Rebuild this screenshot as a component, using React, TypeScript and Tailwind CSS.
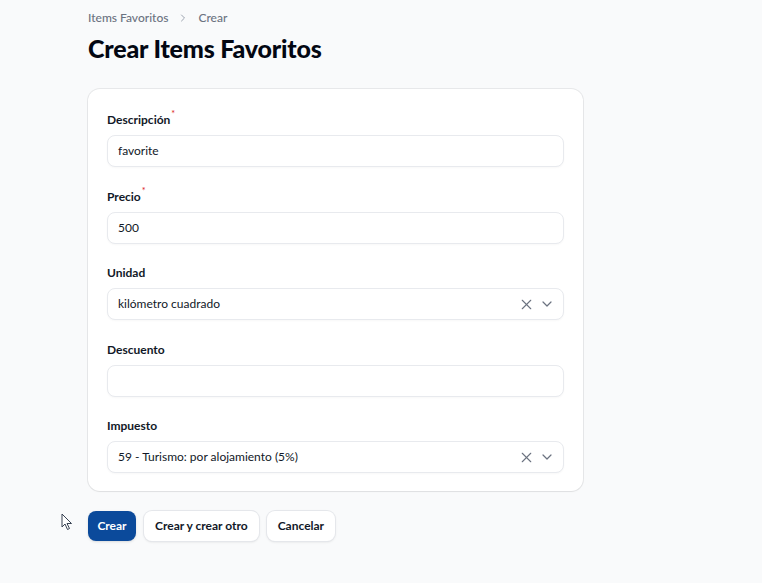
import { X, ChevronDown, ChevronRight } from "lucide-react";

const fields = [
  { label: "Descripción", value: "favorite", required: true, select: false },
  { label: "Precio", value: "500", required: true, select: false },
  { label: "Unidad", value: "kilómetro cuadrado", required: false, select: true },
  { label: "Descuento", value: "", required: false, select: false },
  { label: "Impuesto", value: "59 - Turismo: por alojamiento (5%)", required: false, select: true },
];

export default function App() {
  return (
    <div
      className="relative min-h-[583px] bg-[#f9fafb] text-[#111827]"
      style={{ fontFamily: 'Lato, "Noto Sans", sans-serif' }}
    >
      <div className="w-[495px] ml-[88px] pt-[10px]">
        {/* Breadcrumb */}
        <nav className="flex items-center gap-[9px] text-[12px] font-medium text-[#6b7280] h-[16px]">
          <span>Items Favoritos</span>
          <ChevronRight size={12} strokeWidth={2} className="text-[#9ca3af]" />
          <span>Crear</span>
        </nav>
        <h1 className="mt-[7px] text-[25px] font-black leading-[30px] tracking-[-0.2px] text-[#030712]">
          Crear Items Favoritos
        </h1>

        {/* Form card */}
        <div className="mt-[26px] bg-white rounded-xl ring-1 ring-[#03071212] shadow-[0_1px_2px_rgba(0,0,0,0.04)] px-[19px] pt-[22px] pb-[18px] flex flex-col gap-[20.5px]">
          {fields.map((f) => (
            <div key={f.label} className="flex flex-col gap-[6px]">
              <label className="h-[18px] flex items-center text-[12px] font-bold text-[#111827]">
                {f.label}
                {f.required && <sup className="text-[#dc2626] text-[9px] ml-[1px] -mt-[3px] font-medium">*</sup>}
              </label>
              <div className="h-[32px] rounded-lg border border-[#e8eaee] bg-white shadow-[0_1px_2px_rgba(0,0,0,0.03)] flex items-center pl-[10px] pr-[8px] text-[12px] text-[#111827]">
                <span className="flex-1">{f.value}</span>
                {f.select && (
                  <div className="flex items-center gap-[4px] text-[#6b7280]">
                    <X size={17} strokeWidth={1.6} />
                    <ChevronDown size={16} strokeWidth={1.8} />
                  </div>
                )}
              </div>
            </div>
          ))}
        </div>

        {/* Actions */}
        <div className="mt-[20px] flex items-center gap-[8px] text-[12px] font-bold">
          <button className="h-[30px] w-[48px] rounded-lg bg-[#0b4a9b] text-white shadow-sm">Crear</button>
          <button className="h-[30px] px-[11px] rounded-lg bg-white ring-1 ring-[#e5e7eb] shadow-sm text-[#111827]">
            Crear y crear otro
          </button>
          <button className="h-[30px] px-[11px] rounded-lg bg-white ring-1 ring-[#e5e7eb] shadow-sm text-[#111827]">
            Cancelar
          </button>
        </div>
      </div>

      {/* Mouse cursor */}
      <svg className="absolute left-[61px] top-[513px]" width="12" height="18" viewBox="0 0 12 18">
        <path d="M1 1 L1 14 L4 11 L6.5 16.5 L8.5 15.5 L6 10.5 L10.5 10.5 Z" fill="white" stroke="#374151" strokeWidth="1" strokeLinejoin="round" />
      </svg>
    </div>
  );
}
